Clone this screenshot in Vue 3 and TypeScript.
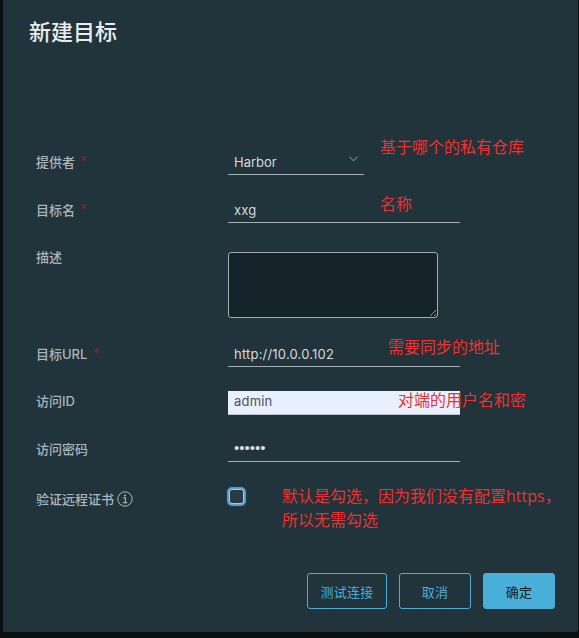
<script setup lang="ts">
import { ref } from "vue";

const provider = ref("Harbor");
const name = ref("xxg");
const desc = ref("");
const url = ref("http://10.0.0.102");
const accessId = ref("admin");
const secret = ref("123456");
const verify = ref(false);
</script>

<template>
  <div class="backdrop">
    <div class="modal">
      <h3 class="title">新建目标</h3>

      <form class="form" @submit.prevent>
        <div class="row">
          <label class="label">提供者<span class="req">*</span></label>
          <div class="select-wrap">
            <select v-model="provider" class="select">
              <option>Harbor</option>
            </select>
            <svg class="chevron" width="9" height="6" viewBox="0 0 9 6" aria-hidden="true">
              <path d="M0.6 0.8 L4.5 4.8 L8.4 0.8" fill="none" stroke="#9fadb3" stroke-width="1" />
            </svg>
          </div>
        </div>

        <div class="row">
          <label class="label">目标名<span class="req">*</span></label>
          <input v-model="name" class="input" type="text" />
        </div>

        <div class="row row-area">
          <label class="label">描述</label>
          <textarea v-model="desc" class="area"></textarea>
        </div>

        <div class="row">
          <label class="label">目标URL<span class="req">*</span></label>
          <input v-model="url" class="input" type="text" />
        </div>

        <div class="row row-tight">
          <label class="label">访问ID</label>
          <input v-model="accessId" class="input filled" type="text" />
        </div>

        <div class="row">
          <label class="label">访问密码</label>
          <input v-model="secret" class="input secret" type="password" />
        </div>

        <div class="row row-check">
          <label class="label">
            验证远程证书
            <svg class="info" width="16" height="16" viewBox="0 0 16 16" aria-hidden="true">
              <circle cx="8" cy="8" r="7.2" fill="none" stroke="#a9b6bb" stroke-width="1" />
              <circle cx="8" cy="4.6" r="1" fill="#a9b6bb" />
              <path d="M6.3 6.9 H8.4 V11.4 M6 11.6 H10.2" fill="none" stroke="#a9b6bb" stroke-width="1.1" />
            </svg>
          </label>
          <input v-model="verify" class="check" type="checkbox" />
        </div>
      </form>

      <div class="footer">
        <button class="btn" type="button">测试连接</button>
        <button class="btn btn-cancel" type="button">取消</button>
        <button class="btn btn-primary" type="button">确定</button>
      </div>

      <!-- red notes drawn over the screenshot -->
      <span class="note n1">基于哪个的私有仓库</span>
      <span class="note n2">名称</span>
      <span class="note n3">需要同步的地址</span>
      <span class="note n4">对端的用户名和密</span>
      <span class="note n5">默认是勾选，因为我们没有配置https，<br />所以无需勾选</span>
    </div>
  </div>
</template>

<style scoped>
.backdrop {
  width: 579px;
  height: 638px;
  box-sizing: border-box;
  padding: 0 1px 6px 3px;
  background: #0a0f11;
  font-family: Inter, "Noto Sans CJK SC", sans-serif;
}
.modal {
  position: relative;
  height: 100%;
  box-sizing: border-box;
  padding: 17px 0 0 26px;
  background: #21333b;
  border-radius: 0 0 3px 0;
  display: flex;
  flex-direction: column;
}
.title {
  margin: 0;
  font-size: 22px;
  line-height: 30px;
  font-weight: 500;
  color: #eaedf0;
}
.form {
  display: flex;
  flex-direction: column;
  margin-top: 90px;
  padding-left: 7px;
}
.row {
  display: grid;
  grid-template-columns: 192px 232px;
  align-items: center;
  height: 48px;
}
.row-area {
  height: 96px;
  align-items: start;
  padding-top: 19px;
  box-sizing: border-box;
}
.row-tight {
  height: 47px;
}
.row-check {
  height: 53px;
}
.label {
  display: flex;
  align-items: center;
  gap: 4px;
  font-size: 13px;
  font-weight: 500;
  color: #a9b6bb;
}
.row-area .label {
  line-height: 20px;
  margin-top: -5px;
}
.req {
  margin-left: 1px;
  color: #7d2420;
  font-size: 13px;
}
.input {
  width: 232px;
  height: 24px;
  box-sizing: border-box;
  padding: 0 6px 2px;
  margin-top: 4px;
  border: 0;
  border-bottom: 1px solid #a3b0b5;
  background: transparent;
  color: #d5dadd;
  font: 400 13px Inter, sans-serif;
  letter-spacing: 0.2px;
  outline: none;
}
.filled {
  background: #e8f0fe;
  color: #4a5055;
  border-bottom-color: #b9c3c8;
}
.secret {
  padding-bottom: 4px;
  font: 400 15px "Liberation Sans", sans-serif;
  letter-spacing: 0;
}
.select-wrap {
  position: relative;
  width: 136px;
  margin-top: 4px;
}
.select {
  display: block;
  width: 100%;
  height: 24px;
  box-sizing: border-box;
  padding: 0 6px 2px;
  border: 0;
  border-bottom: 1px solid #a3b0b5;
  border-radius: 0;
  background: transparent;
  color: #d5dadd;
  font: 400 13px Inter, sans-serif;
  appearance: none;
  outline: none;
}
.chevron {
  position: absolute;
  right: 6px;
  top: 5px;
}
.area {
  display: block;
  width: 210px;
  height: 66px;
  box-sizing: border-box;
  border: 1px solid #9fadb3;
  border-radius: 3px;
  background: #17232b;
  outline: none;
}
.info {
  margin-left: -1px;
}
.check {
  appearance: none;
  width: 15px;
  height: 15px;
  margin: 0 0 0 1px;
  box-sizing: border-box;
  border: 1px solid #b4c8d2;
  border-radius: 3px;
  background: #2a3a42;
  box-shadow: 0 0 1px 2px #5aa5cc;
  transform: translateY(-2px);
}
.footer {
  display: flex;
  gap: 12px;
  margin-top: auto;
  margin-bottom: 23px;
  padding-right: 23px;
  justify-content: flex-end;
}
.btn {
  height: 36px;
  padding: 0;
  width: 80px;
  box-sizing: border-box;
  border: 1px solid #49afd9;
  border-radius: 3px;
  background: transparent;
  color: #49afd9;
  font: 400 13px Inter, "Noto Sans CJK SC", sans-serif;
  letter-spacing: 0.3px;
}
.btn-cancel {
  width: 72px;
}
.btn-primary {
  width: 72px;
  background: #49afd9;
  color: #0f1b21;
}
.note {
  position: absolute;
  font-size: 16px;
  line-height: 24px;
  color: #f0302f;
  white-space: nowrap;
  font-family: "Open Sans", "Noto Sans CJK SC", sans-serif;
}
.n1 { left: 377px; top: 135px; }
.n2 { left: 377px; top: 192px; }
.n3 { left: 385px; top: 335px; }
.n4 { left: 395px; top: 388px; }
.n5 { left: 279px; top: 484px; }
</style>
